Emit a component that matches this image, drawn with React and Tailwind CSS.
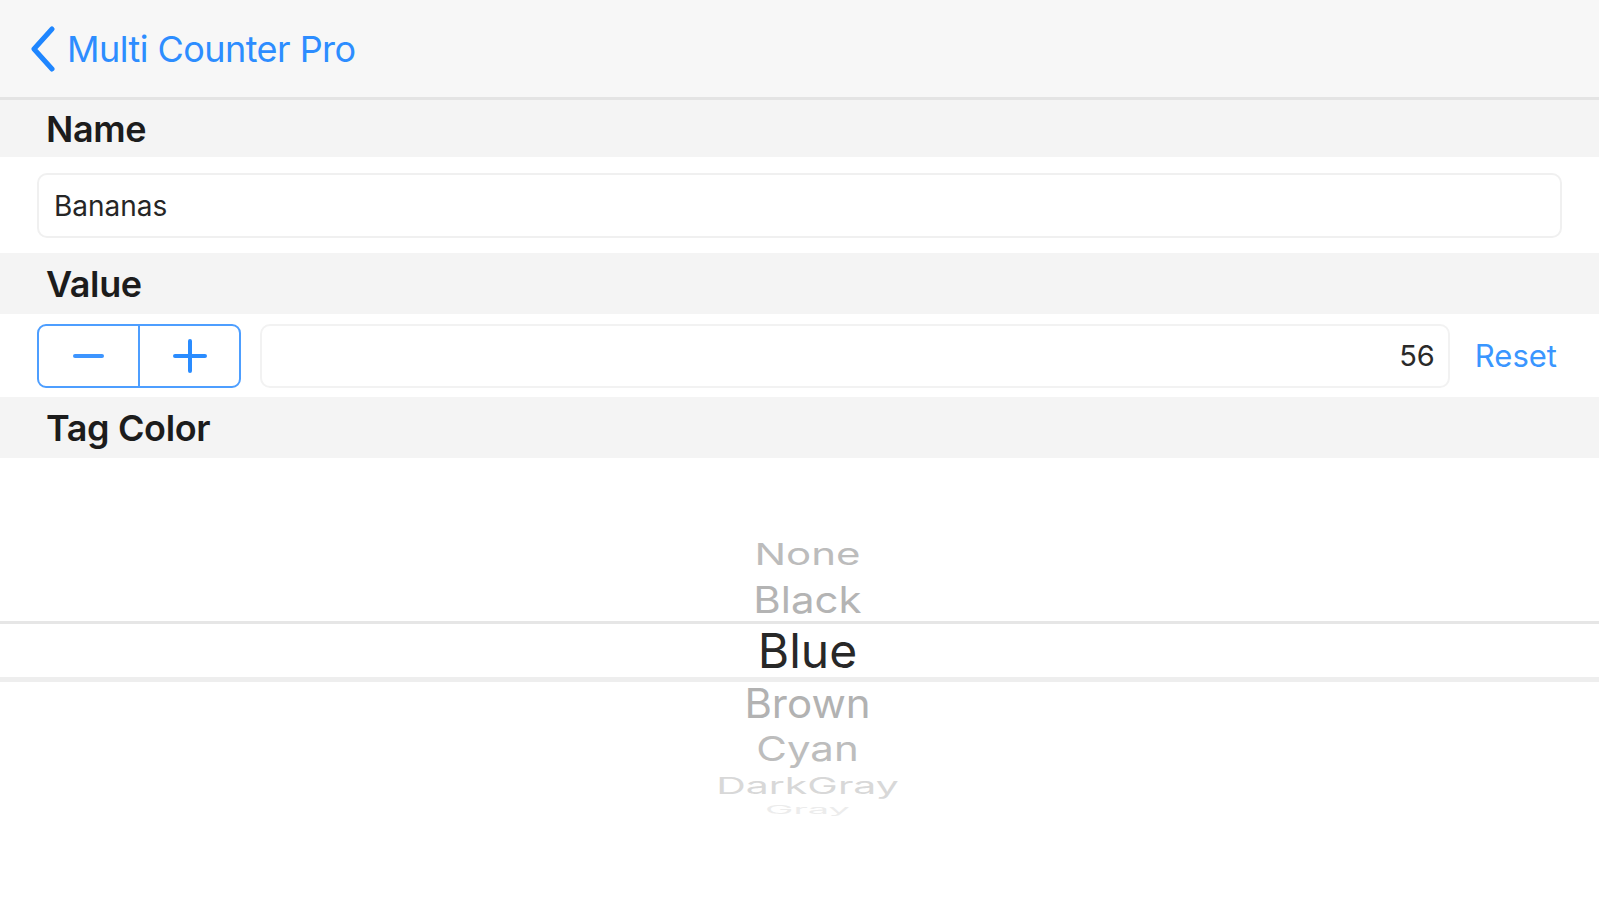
import React from "react";

const font = { fontFamily: "Inter, 'Noto Sans', sans-serif" };

const SectionHeader = ({ title, h }) => (
  <div className={`flex items-center bg-[#f4f4f4] pl-[46px] ${h}`}>
    <span className="text-[36px] font-semibold text-[#1c1c1c] leading-none tracking-[-0.01em]">
      {title}
    </span>
  </div>
);

const PickerRow = ({ label, h, size, color, scale }) => (
  <div className={`flex items-center justify-center pl-[16px] ${h}`}>
    <span className={`leading-none ${size} ${color} ${scale}`}>{label}</span>
  </div>
);

const App = () => {
  return (
    <div className="w-[1599px] h-[900px] overflow-hidden bg-white" style={font}>
      {/* nav bar */}
      <div className="flex items-center h-[100px] bg-[#f7f7f7] border-b-[3px] border-[#e4e4e4] pl-[29px]">
        <svg width="28" height="46" viewBox="0 0 28 46" fill="none">
          <path d="M23 3 L5 23 L23 43" stroke="#1f86ff" strokeWidth="5" strokeLinecap="round" strokeLinejoin="round" />
        </svg>
        <span className="ml-[10px] text-[36px] text-[#2d8dff] leading-none tracking-[-0.015em]">
          Multi Counter Pro
        </span>
      </div>

      <SectionHeader title="Name" h="h-[57px]" />
      <div className="px-[37px] pt-[16px] pb-[15px]">
        <div className="h-[65px] flex items-center pl-[15px] rounded-[10px] border-2 border-[#f0f0f0]">
          <span className="text-[28px] text-[#262626] leading-none">Bananas</span>
        </div>
      </div>

      <SectionHeader title="Value" h="h-[61px]" />
      <div className="flex items-center h-[83px] pl-[37px] pr-[42px]">
        <div className="flex h-[64px] w-[204px] rounded-[9px] border-2 border-[#4d9eff]">
          <button className="flex-1 flex items-center justify-center border-r-2 border-[#4d9eff]">
            <span className="block w-[31px] h-[4px] rounded-sm bg-[#3d95ff]" />
          </button>
          <button className="flex-1 flex items-center justify-center">
            <svg width="34" height="34" viewBox="0 0 34 34">
              <path d="M17 2 V32 M2 17 H32" stroke="#2a8cff" strokeWidth="4" strokeLinecap="round" />
            </svg>
          </button>
        </div>
        <div className="ml-[19px] flex-1 h-[64px] flex items-center justify-end pr-[13px] rounded-[10px] border-2 border-[#f2f2f2]">
          <span className="text-[29px] text-[#2a2a2a] leading-none">56</span>
        </div>
        <span className="ml-[25px] text-[31px] text-[#3a96ff] leading-none">Reset</span>
      </div>

      <SectionHeader title="Tag Color" h="h-[61px]" />

      {/* wheel picker */}
      <div className="pt-[72px]">
        <PickerRow label="None" h="h-[48px]" size="text-[42px]" color="text-[#bcbcbc]" scale="scale-y-[0.72]" />
        <PickerRow label="Black" h="h-[43px]" size="text-[42px]" color="text-[#b4b4b4]" scale="scale-y-[0.87]" />
        <div className="border-t-[3px] border-[#e6e6e6] border-b-[5px] border-b-[#eeeeee]">
          <PickerRow label="Blue" h="h-[53px]" size="text-[48px]" color="text-[#282828]" scale="" />
        </div>
        <PickerRow label="Brown" h="h-[44px]" size="text-[42px]" color="text-[#b2b2b2]" scale="scale-y-[0.96]" />
        <PickerRow label="Cyan" h="h-[46px]" size="text-[42px]" color="text-[#bdbdbd]" scale="scale-y-[0.8]" />
        <PickerRow label="DarkGray" h="h-[28px]" size="text-[41px]" color="text-[#d8d8d8]" scale="scale-y-[0.55]" />
        <PickerRow label="Gray" h="h-[20px]" size="text-[38px]" color="text-[#ececec]" scale="scale-y-[0.3]" />
      </div>
    </div>
  );
};

export default App;
